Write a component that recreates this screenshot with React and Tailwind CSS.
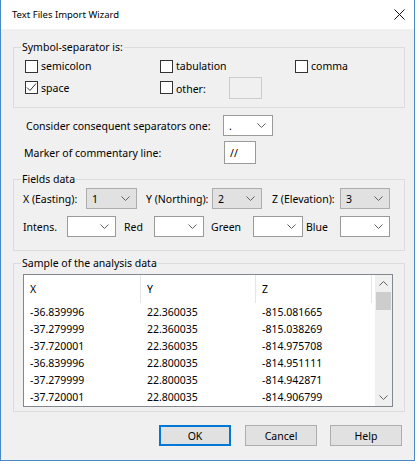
import React from 'react';

const rows = [
  ['-36.839996', '22.360035', '-815.081665'],
  ['-37.279999', '22.360035', '-815.038269'],
  ['-37.720001', '22.360035', '-814.975708'],
  ['-36.839996', '22.800035', '-814.951111'],
  ['-37.279999', '22.800035', '-814.942871'],
  ['-37.720001', '22.800035', '-814.906799'],
];

function Chevron({ up = false }) {
  return (
    <svg width="9" height="5" viewBox="0 0 9 5" className="shrink-0">
      <polyline
        points={up ? '0.5,4.5 4.5,0.5 8.5,4.5' : '0.5,0.5 4.5,4.5 8.5,0.5'}
        fill="none"
        stroke="#606060"
        strokeWidth="1"
      />
    </svg>
  );
}

function Check({ checked = false }) {
  return (
    <span className="w-[13px] h-[13px] shrink-0 border border-[#333] bg-white flex items-center justify-center">
      {checked && (
        <svg width="11" height="11" viewBox="0 0 11 11">
          <polyline points="1,5.5 4,8.5 10,1.5" fill="none" stroke="#333" strokeWidth="1" />
        </svg>
      )}
    </span>
  );
}

function Option({ label, checked }) {
  return (
    <div className="flex items-center gap-[3px]">
      <Check checked={checked} />
      <span>{label}</span>
    </div>
  );
}

// combo box; gray = drop-down list style, otherwise editable (white)
function Combo({ value = '', gray = false, width }) {
  return (
    <div
      className={`flex items-center justify-between h-[21px] shrink-0 border pl-[5px] pr-[6px] ${width} ${
        gray ? 'border-[#adadad] bg-[#e1e1e1]' : 'border-[#9a9a9a] bg-white'
      }`}
    >
      <span>{value}</span>
      <Chevron />
    </div>
  );
}

function Group({ title, className = '', children }) {
  return (
    <fieldset className={`ml-[12px] w-[392px] border border-[#dcdcdc] ${className}`}>
      <legend className="ml-[7px] px-[1px] leading-[14px]">{title}</legend>
      {children}
    </fieldset>
  );
}

function Button({ label, primary = false }) {
  return (
    <button
      className={`w-[72px] h-[21px] flex items-center justify-center bg-[#e1e1e1] ${
        primary ? 'border-2 border-[#0078d7]' : 'border border-[#adadad]'
      }`}
    >
      {label}
    </button>
  );
}

export default function App() {
  return (
    <div className="w-[420px] h-[464px] bg-white text-black text-[10.5px] leading-[14px] font-['Segoe_UI','Noto_Sans',sans-serif]">
      <div className="w-[415px] h-[461px] flex flex-col border-l border-r border-b border-[#4a8ac4] bg-[#f0f0f0]">
        {/* Title bar */}
        <div className="h-[29px] shrink-0 bg-white flex items-center justify-between pl-[11px] pr-[9px]">
          <span className="text-[9.5px]">Text Files Import Wizard</span>
          <svg width="11" height="11" viewBox="0 0 11 11">
            <path d="M0.5 0.5L10.5 10.5M10.5 0.5L0.5 10.5" stroke="#111" strokeWidth="1" />
          </svg>
        </div>

        {/* Separator options */}
        <Group title="Symbol-separator is:" className="mt-[11px] pb-[8px]">
          <div className="grid grid-cols-[135px_135px_1fr] pl-[11px] mt-[2px]">
            <div className="h-[20px] flex items-center">
              <Option label="semicolon" />
            </div>
            <div className="h-[20px] flex items-center">
              <Option label="tabulation" />
            </div>
            <div className="h-[20px] flex items-center">
              <Option label="comma" />
            </div>
            <div className="h-[23px] flex items-center">
              <Option label="space" checked />
            </div>
            <div className="h-[23px] flex items-center">
              <Check />
              <span className="w-[56px] pl-[3px] pt-[2px]">other:</span>
              <div className="w-[33px] h-[22px] border border-[#cccccc] bg-[#f0f0f0]" />
            </div>
            <div />
          </div>
        </Group>

        <div className="mt-[7px] h-[21px] flex items-center pl-[25px]">
          <span className="w-[197px]">Consider consequent separators one:</span>
          <Combo value="." width="w-[50px]" />
        </div>

        <div className="mt-[5px] h-[23px] flex items-center pl-[23px]">
          <span className="w-[200px]">Marker of commentary line:</span>
          <div className="w-[32px] h-[23px] border border-[#9a9a9a] bg-white flex items-center pl-[5px]">
            //
          </div>
        </div>

        {/* Fields */}
        <Group title="Fields data" className="mt-[8px] pb-[13px]">
          <div className="mt-[2px] h-[21px] flex items-center pl-[9px]">
            <span className="w-[63px]">X (Easting):</span>
            <Combo value="1" gray width="w-[51px]" />
            <span className="w-[75px] pl-[9px]">Y (Northing):</span>
            <Combo value="2" gray width="w-[50px]" />
            <span className="w-[78px] pl-[10px]">Z (Elevation):</span>
            <Combo value="3" gray width="w-[50px]" />
          </div>
          <div className="mt-[7px] h-[21px] flex items-center pl-[9px]">
            <span className="w-[44px]">Intens.</span>
            <Combo width="w-[49px]" />
            <span className="w-[38px] pl-[8px]">Red</span>
            <Combo width="w-[50px]" />
            <span className="w-[49px] pl-[7px]">Green</span>
            <Combo width="w-[50px]" />
            <span className="w-[37px] pl-[3px]">Blue</span>
            <Combo width="w-[50px]" />
          </div>
        </Group>

        {/* Sample list */}
        <Group title="Sample of the analysis data" className="mt-[5px] pb-[4px]">
          <div className="ml-[9px] mt-[4px] w-[370px] h-[133px] border border-[#828790] bg-white flex">
            <div className="w-[351px] flex flex-col">
              <div className="h-[28px] flex">
                <div className="w-[117px] border-r border-[#e5e5e5] flex items-center pl-[6px]">X</div>
                <div className="w-[115px] border-r border-[#e5e5e5] flex items-center pl-[6px]">Y</div>
                <div className="w-[116px] border-r border-[#e5e5e5] flex items-center pl-[6px]">Z</div>
              </div>
              {rows.map((r, i) => (
                <div key={i} className="h-[17px] flex items-center">
                  <span className="w-[117px] pl-[6px]">{r[0]}</span>
                  <span className="w-[115px] pl-[6px]">{r[1]}</span>
                  <span className="w-[116px] pl-[6px]">{r[2]}</span>
                </div>
              ))}
            </div>
            <div className="w-[17px] flex flex-col bg-[#f0f0f0]">
              <div className="h-[17px] flex items-center justify-center">
                <Chevron up />
              </div>
              <div className="mx-[1px] h-[18px] bg-[#cdcdcd]" />
              <div className="flex-1" />
              <div className="h-[17px] flex items-center justify-center">
                <Chevron />
              </div>
            </div>
          </div>
        </Group>

        {/* Buttons */}
        <div className="mt-[13px] flex justify-end pr-[12px]">
          <Button label="OK" primary />
          <div className="w-[14px]" />
          <Button label="Cancel" />
          <div className="w-[13px]" />
          <Button label="Help" />
        </div>
      </div>
    </div>
  );
}
